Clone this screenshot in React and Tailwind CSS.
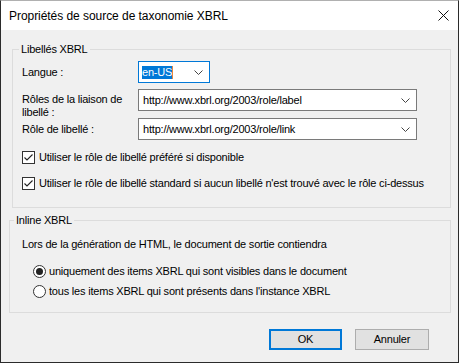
import React from "react";

function Chevron() {
  return (
    <svg width="9" height="5" viewBox="0 0 9 5" className="block">
      <path d="M0.5 0.5 L4.5 4.5 L8.5 0.5" fill="none" stroke="#444" strokeWidth="1" />
    </svg>
  );
}

function Select({ value, width, focused }) {
  return (
    <div
      className={`h-[22px] ${width} bg-white border ${focused ? "border-[#0078d7]" : "border-[#7a7a7a]"} flex items-center justify-between pl-[3px] pr-[6px]`}
    >
      {focused ? (
        <span className="flex items-center">
          <span className="bg-[#0078d7] text-white leading-[13px] px-[0px]">{value}</span>
          <span className="w-[1px] h-[13px] bg-[#e8863a]"></span>
        </span>
      ) : (
        <span className="leading-[13px] pl-[1px]">{value}</span>
      )}
      <Chevron />
    </div>
  );
}

function Checkbox({ label }) {
  return (
    <div className="flex items-center h-[13px]">
      <div className="w-[13px] h-[13px] border border-[#333] bg-white flex items-center justify-center">
        <svg width="11" height="11" viewBox="0 0 11 11">
          <path d="M1.5 5.5 L4 8 L9.5 2.5" fill="none" stroke="#222" strokeWidth="1.1" />
        </svg>
      </div>
      <span className="ml-[4px] leading-[13px]">{label}</span>
    </div>
  );
}

function Radio({ label, checked }) {
  return (
    <div className="flex items-center h-[13px]">
      <div className="w-[13px] h-[13px] rounded-full border border-[#333] bg-white flex items-center justify-center">
        {checked && <div className="w-[7px] h-[7px] rounded-full bg-[#222]"></div>}
      </div>
      <span className="ml-[3px] leading-[13px]">{label}</span>
    </div>
  );
}

export default function App() {
  return (
    <div className="w-[459px] h-[363px] bg-[#f0f0f0] border-l border-r border-b border-[#2b2b2b] border-t border-t-[#b0b0b0] flex flex-col text-[11px] tracking-[-0.2px] text-black font-['Liberation_Sans',Arial,sans-serif] overflow-hidden">
      <div className="h-[29px] bg-white flex items-center justify-between pl-[8px] pr-[9px]">
        <span className="text-[12px] leading-[14px] tracking-[-0.05px] text-black">Propriétés de source de taxonomie XBRL</span>
        <svg width="11" height="11" viewBox="0 0 11 11">
          <path d="M0.5 0.5 L10.5 10.5 M10.5 0.5 L0.5 10.5" stroke="#111" strokeWidth="1" />
        </svg>
      </div>

      <fieldset className="ml-[11px] mt-[12px] w-[439px] border border-[#dcdcdc] pb-[17px]">
        <legend className="ml-[6px] px-[2px] leading-[14px]">Libellés XBRL</legend>
        <div className="pl-[9px] pt-[5px] flex flex-col">
          <div className="flex items-center h-[22px]">
            <span className="w-[116px] leading-[13px]">Langue :</span>
            <Select value="en-US" width="w-[72px]" focused />
          </div>
          <div className="flex items-start h-[22px] mt-[6px]">
            <span className="w-[116px] leading-[13px] pt-[4px]">
              Rôles de la liaison de
              <br />
              libellé :
            </span>
            <Select value="http://www.xbrl.org/2003/role/label" width="w-[279px]" />
          </div>
          <div className="flex items-center h-[22px] mt-[7px]">
            <span className="w-[116px] leading-[13px]">Rôle de libellé :</span>
            <Select value="http://www.xbrl.org/2003/role/link" width="w-[279px]" />
          </div>
          <div className="mt-[11px]">
            <Checkbox label="Utiliser le rôle de libellé préféré si disponible" />
          </div>
          <div className="mt-[13px]">
            <Checkbox label="Utiliser le rôle de libellé standard si aucun libellé n'est trouvé avec le rôle ci-dessus" />
          </div>
        </div>
      </fieldset>

      <fieldset className="ml-[8px] mt-[5px] w-[442px] border border-[#dcdcdc] pb-[14px]">
        <legend className="ml-[4px] px-[2px] leading-[14px]">Inline XBRL</legend>
        <div className="pl-[12px] pt-[10px] flex flex-col">
          <div className="h-[14px] leading-[14px]">Lors de la génération de HTML, le document de sortie contiendra</div>
          <div className="mt-[14px] ml-[11px]">
            <Radio checked label="uniquement des items XBRL qui sont visibles dans le document" />
          </div>
          <div className="mt-[7px] ml-[11px]">
            <Radio label="tous les items XBRL qui sont présents dans l'instance XBRL" />
          </div>
        </div>
      </fieldset>

      <div className="mt-[16px] flex justify-end gap-[13px] pr-[29px]">
        <button className="w-[73px] h-[21px] bg-[#e1e1e1] border-2 border-[#0078d7] text-[11px] leading-[13px] flex items-center justify-center">
          OK
        </button>
        <button className="w-[74px] h-[21px] bg-[#e1e1e1] border border-[#adadad] text-[11px] leading-[13px] flex items-center justify-center">
          Annuler
        </button>
      </div>
    </div>
  );
}
